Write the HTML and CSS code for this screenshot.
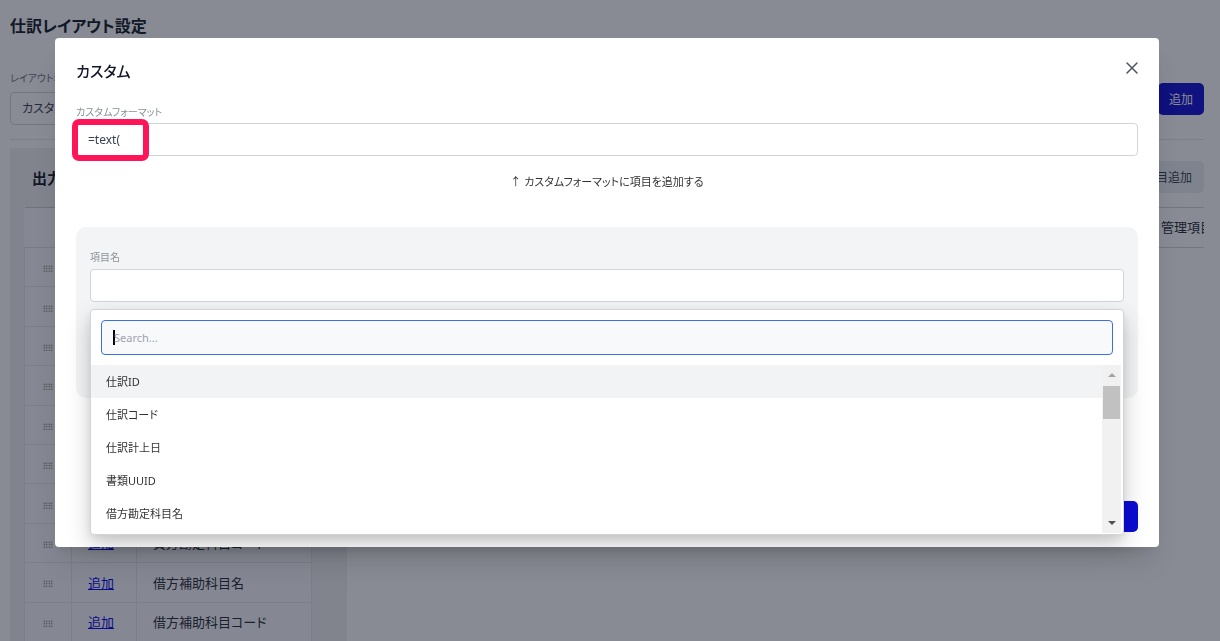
FILE: index.html
```html
<!DOCTYPE html>
<html lang="ja">
<head>
<meta charset="utf-8">
<title>仕訳レイアウト設定</title>
<link rel="stylesheet" href="styles.css">
</head>
<body>
<div class="page">
  <h1 class="page-title">仕訳レイアウト設定</h1>
  <div class="toolbar">
    <div class="field">
      <span class="field-label">レイアウト名</span>
      <div class="bg-input">カスタム</div>
    </div>
    <button class="btn-primary">追加</button>
  </div>
  <hr class="divider">
  <div class="main">
    <section class="panel">
      <h2 class="panel-title">出力項目</h2>
      <table class="item-table">
        <thead>
          <tr><th class="c-handle"></th><th class="c-action"></th><th class="c-name"></th></tr>
        </thead>
        <tbody>
          <tr><td class="c-handle"><span class="grip"></span></td><td class="c-action"><a href="#">追加</a></td><td class="c-name">仕訳ID</td></tr>
          <tr><td class="c-handle"><span class="grip"></span></td><td class="c-action"><a href="#">追加</a></td><td class="c-name">仕訳コード</td></tr>
          <tr><td class="c-handle"><span class="grip"></span></td><td class="c-action"><a href="#">追加</a></td><td class="c-name">仕訳計上日</td></tr>
          <tr><td class="c-handle"><span class="grip"></span></td><td class="c-action"><a href="#">追加</a></td><td class="c-name">書類UUID</td></tr>
          <tr><td class="c-handle"><span class="grip"></span></td><td class="c-action"><a href="#">追加</a></td><td class="c-name">借方勘定科目名</td></tr>
          <tr><td class="c-handle"><span class="grip"></span></td><td class="c-action"><a href="#">追加</a></td><td class="c-name">借方勘定科目コード</td></tr>
          <tr><td class="c-handle"><span class="grip"></span></td><td class="c-action"><a href="#">追加</a></td><td class="c-name">貸方勘定科目名</td></tr>
          <tr><td class="c-handle"><span class="grip"></span></td><td class="c-action"><a href="#">追加</a></td><td class="c-name">貸方勘定科目コード</td></tr>
          <tr><td class="c-handle"><span class="grip"></span></td><td class="c-action"><a href="#">追加</a></td><td class="c-name">借方補助科目名</td></tr>
          <tr><td class="c-handle"><span class="grip"></span></td><td class="c-action"><a href="#">追加</a></td><td class="c-name">借方補助科目コード</td></tr>
        </tbody>
      </table>
    </section>
    <section class="side">
      <div class="side-actions"><button class="btn-secondary">管理項目追加</button></div>
      <div class="side-head">
        <div class="side-fill"></div>
        <div class="side-cell">管理項目名</div>
      </div>
    </section>
  </div>
</div>

<div class="overlay"></div>

<div class="modal">
  <div class="modal-header">
    <h3 class="modal-title">カスタム</h3>
    <button class="modal-close" aria-label="閉じる">
      <svg width="12" height="12" viewBox="0 0 12 12"><path d="M1 1L11 11M11 1L1 11" stroke="#4b5563" stroke-width="1.5" stroke-linecap="round"/></svg>
    </button>
  </div>

  <div class="modal-field">
    <span class="m-label">カスタムフォーマット</span>
    <div class="m-input">=text(</div>
  </div>

  <p class="hint">↑ カスタムフォーマットに項目を追加する</p>

  <div class="item-box">
    <div class="item-field">
      <span class="m-label">項目名</span>
      <div class="m-input"></div>
      <div class="dropdown">
        <div class="search"><span class="caret"></span><span class="placeholder">Search...</span></div>
        <div class="list">
          <ul class="options">
            <li class="option active">仕訳ID</li>
            <li class="option">仕訳コード</li>
            <li class="option">仕訳計上日</li>
            <li class="option">書類UUID</li>
            <li class="option">借方勘定科目名</li>
            <li class="option">借方勘定科目コード</li>
          </ul>
          <div class="scrollbar">
            <span class="arrow-up"></span>
            <span class="thumb"></span>
            <span class="arrow-down"></span>
          </div>
        </div>
      </div>
    </div>
  </div>

  <div class="modal-footer">
    <button class="btn-submit">追加</button>
  </div>
</div>

<div class="annotation"></div>
</body>
</html>
```

FILE: styles.css
```css
* { box-sizing: border-box; }
html, body { margin: 0; height: 100%; }
body {
  font-family: "Noto Sans", "Noto Sans CJK JP", sans-serif;
  font-feature-settings: "palt";
  color: #1f2937;
  background: #fff;
  overflow: hidden;
}

/* ---------- background page ---------- */
.page { padding: 0 16px 0 10px; }
.page-title {
  margin: 13px 0 0;
  font-size: 16px;
  line-height: 26px;
  font-weight: 700;
  color: #111827;
}
.toolbar {
  display: flex;
  justify-content: space-between;
  align-items: flex-start;
  margin-top: 32px;
}
.field-label {
  display: block;
  font-size: 10px;
  line-height: 14px;
  color: #6b7280;
}
.bg-input {
  margin-top: 7px;
  width: 420px;
  height: 33px;
  border: 1px solid #d1d5db;
  border-radius: 4px;
  padding: 0 11px;
  font-size: 12px;
  line-height: 31px;
  color: #374151;
  background: #fff;
}
.btn-primary {
  margin-top: 12px;
  width: 46px;
  height: 32px;
  border: 0;
  border-radius: 5px;
  background: #0c0cd6;
  color: #fff;
  font: inherit;
  font-size: 12px;
}
.divider {
  margin: 14px 0 0;
  border: 0;
  border-top: 1px solid #e5e7eb;
}
.main { display: flex; margin-top: 8px; }
.panel {
  flex: none;
  width: 337px;
  height: 500px;
  background: #f0f0f3;
  padding: 18px 35px 0 14px;
}
.panel-title {
  margin: 0 0 17px;
  padding-left: 8px;
  font-size: 15px;
  line-height: 24px;
  font-weight: 700;
  color: #111827;
}
.item-table {
  width: 288px;
  border-collapse: collapse;
  background: #f9f9fc;
  font-size: 13px;
  color: #1f2937;
}
.item-table th {
  height: 40px;
  border-top: 1px solid #c9ccd3;
  border-bottom: 1px solid #dfe1e6;
}
.item-table td {
  height: 39.4px;
  border: 1px solid #e2e4e9;
  padding: 0;
}
.c-handle { width: 47px; text-align: center; }
.c-action { width: 65px; padding-left: 16px !important; }
.c-name { padding-left: 16px !important; }
.item-table a { color: #0000ee; text-decoration: underline; }
.grip {
  display: inline-block;
  width: 10px;
  height: 7px;
  vertical-align: middle;
  background-image: radial-gradient(circle, #7a7a7a 0.7px, transparent 0.9px);
  background-size: 2.5px 2.5px;
}
.side {
  flex: 1;
  min-width: 0;
  overflow: hidden;
  padding-top: 13px;
}
.side-actions { display: flex; justify-content: flex-end; }
.btn-secondary {
  height: 32px;
  padding: 0 12px;
  border: 0;
  border-radius: 5px;
  background: #eceef2;
  color: #374151;
  font: inherit;
  font-size: 12px;
}
.side-head {
  display: flex;
  margin-top: 14px;
  height: 41px;
  border-top: 1px solid #d1d5db;
  border-bottom: 1px solid #d1d5db;
}
.side-fill { flex: 1; }
.side-cell {
  flex: 0 0 46px;
  overflow: hidden;
  white-space: nowrap;
  padding-left: 3px;
  font-size: 13px;
  line-height: 39px;
  color: #1f2937;
}

/* ---------- overlay ---------- */
.overlay {
  position: fixed;
  inset: 0;
  background: rgba(17, 24, 39, 0.5);
}

/* ---------- modal ---------- */
.modal {
  position: fixed;
  top: 38px;
  left: 55px;
  width: 1104px;
  height: 509px;
  display: flex;
  flex-direction: column;
  padding: 21px 21px 15px;
  background: #fff;
  border-radius: 4px;
  box-shadow: 0 20px 25px -5px rgba(0,0,0,0.1), 0 8px 10px -6px rgba(0,0,0,0.1);
}
.modal-header {
  display: flex;
  justify-content: space-between;
  align-items: flex-start;
  height: 24px;
}
.modal-title {
  margin: 0;
  font-size: 15px;
  line-height: 24px;
  font-weight: 500;
  color: #111827;
}
.modal-close {
  margin: 3px 0 0;
  padding: 0;
  border: 0;
  background: none;
  width: 12px;
  height: 12px;
  line-height: 0;
}
.modal-field { margin-top: 22px; }
.m-label {
  display: block;
  font-size: 10px;
  line-height: 14px;
  color: #8b8f98;
}
.m-input {
  margin-top: 4px;
  height: 33px;
  border: 1px solid #d1d5db;
  border-radius: 4px;
  padding: 0 11px;
  font-size: 12px;
  line-height: 31px;
  color: #374151;
  background: #fff;
}
.hint {
  margin: 18px 0 0;
  text-align: center;
  font-size: 11px;
  line-height: 16px;
  color: #333;
}
.item-box {
  margin-top: 37px;
  padding: 23px 14px 96px;
  background: #f3f4f6;
  border-radius: 10px;
}
.item-field { position: relative; }
.item-field .m-input { margin-top: 5px; }

.dropdown {
  position: absolute;
  top: calc(100% + 7px);
  left: 0;
  right: 0;
  z-index: 2;
  padding: 10px 0 0;
  background: #fff;
  border: 1px solid #d1d5db;
  border-radius: 4px;
  box-shadow: 0 10px 25px rgba(0,0,0,0.2), 0 4px 10px rgba(0,0,0,0.08);
}
.search {
  margin: 0 10px;
  height: 35px;
  border: 1px solid #3b6fe6;
  border-radius: 4px;
  background: #f8f9fb;
  padding-left: 11px;
  display: flex;
  align-items: center;
  font-size: 11px;
}
.caret {
  display: inline-block;
  width: 2px;
  height: 15px;
  background: #000;
  margin-right: -1px;
}
.placeholder { color: #9ca3af; }
.list {
  display: flex;
  margin-top: 10px;
  height: 169px;
  overflow: hidden;
  padding-right: 2px;
}
.options {
  flex: 1;
  margin: 0;
  padding: 0;
  list-style: none;
}
.option {
  height: 33px;
  padding-left: 15px;
  font-size: 11px;
  line-height: 33px;
  color: #333;
}
.option.active { background: #f2f3f5; }
.scrollbar {
  flex: 0 0 19px;
  height: 168px;
  background: #f1f1f1;
  display: flex;
  flex-direction: column;
  align-items: center;
}
.arrow-up {
  margin-top: 8px;
  width: 0;
  height: 0;
  border-left: 4px solid transparent;
  border-right: 4px solid transparent;
  border-bottom: 4px solid #a3a3a3;
}
.thumb {
  margin-top: 9px;
  width: 17px;
  height: 33px;
  background: #c1c1c1;
}
.arrow-down {
  margin-top: auto;
  margin-bottom: 8px;
  width: 0;
  height: 0;
  border-left: 4px solid transparent;
  border-right: 4px solid transparent;
  border-top: 4px solid #505050;
}
.modal-footer {
  margin-top: auto;
  display: flex;
  justify-content: flex-end;
}
.btn-submit {
  width: 64px;
  height: 31px;
  border: 0;
  border-radius: 5px;
  background: #0c0cd6;
  color: #fff;
  font: inherit;
  font-size: 12px;
}

/* ---------- annotation ---------- */
.annotation {
  position: fixed;
  left: 72px;
  top: 119px;
  width: 77px;
  height: 42px;
  border: 6px solid #fe1557;
  border-radius: 7px;
}
```
